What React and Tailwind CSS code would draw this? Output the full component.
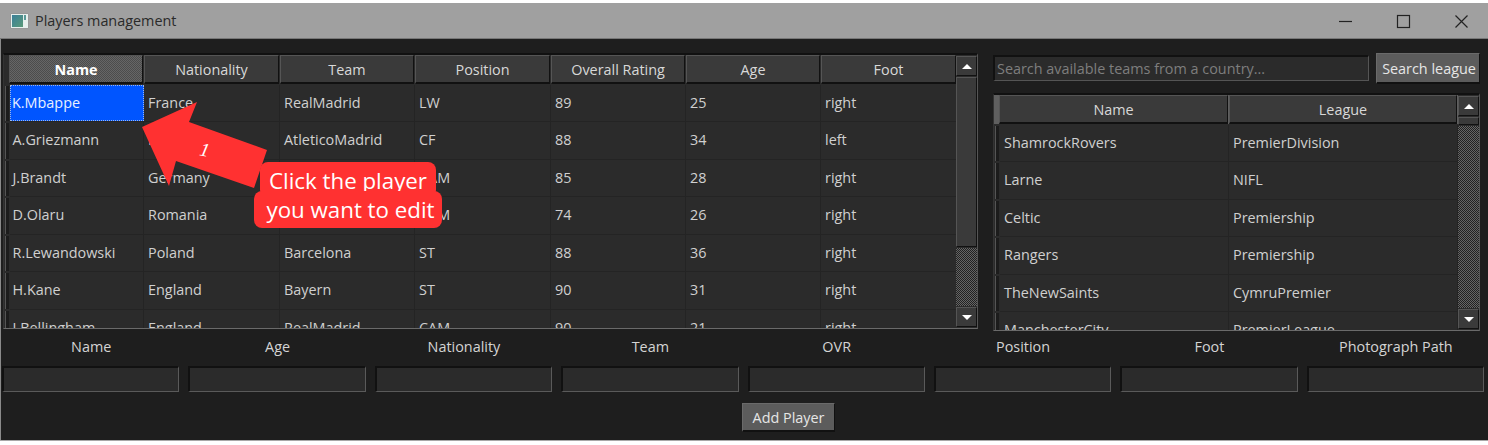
import React from 'react';

const players = [
  ['K.Mbappe', 'France', 'RealMadrid', 'LW', '89', '25', 'right'],
  ['A.Griezmann', 'France', 'AtleticoMadrid', 'CF', '88', '34', 'left'],
  ['J.Brandt', 'Germany', 'Dortmund', 'CAM', '85', '28', 'right'],
  ['D.Olaru', 'Romania', 'FCSB', 'CAM', '74', '26', 'right'],
  ['R.Lewandowski', 'Poland', 'Barcelona', 'ST', '88', '36', 'right'],
  ['H.Kane', 'England', 'Bayern', 'ST', '90', '31', 'right'],
  ['J.Bellingham', 'England', 'RealMadrid', 'CAM', '90', '21', 'right'],
];

const teams = [
  ['ShamrockRovers', 'PremierDivision'],
  ['Larne', 'NIFL'],
  ['Celtic', 'Premiership'],
  ['Rangers', 'Premiership'],
  ['TheNewSaints', 'CymruPremier'],
  ['ManchesterCity', 'PremierLeague'],
];

const playerHeaders = ['Name', 'Nationality', 'Team', 'Position', 'Overall Rating', 'Age', 'Foot'];
const fields = ['Name', 'Age', 'Nationality', 'Team', 'OVR', 'Position', 'Foot', 'Photograph Path'];

const ScrollButton = ({ down }) => (
  <div className="h-[20px] shrink-0 bg-[#3a3a3a] border-t border-l border-[#555] border-b border-r border-b-[#111] border-r-[#111] flex items-center justify-center">
    <div className={down
      ? 'w-0 h-0 border-l-[5px] border-r-[5px] border-t-[5px] border-l-transparent border-r-transparent border-t-white'
      : 'w-0 h-0 border-l-[5px] border-r-[5px] border-b-[5px] border-l-transparent border-r-transparent border-b-white'} />
  </div>
);

const Scrollbar = ({ thumb }) => (
  <div className="w-[21px] shrink-0 flex flex-col gap-[1px] py-[1px]">
    <ScrollButton />
    <div className={`${thumb} shrink-0 bg-[#3a3a3a] border border-[#555] border-b-[#111] border-r-[#111]`} />
    <div className="flex-1 bg-[repeating-conic-gradient(#666_0_25%,#222_0_50%)] bg-[length:2px_2px]" />
    <ScrollButton down />
  </div>
);

const Table = ({ headers, rows, headerH, headerGutter, rowGutter, widths, textPad, restPad, scrollThumb, selected }) => (
  <div className="flex h-full bg-[#2b2b2b] border-t-2 border-t-[#111] border-l border-l-[#333] border-r border-r-[#555] border-b border-b-[#6a6a6a] overflow-hidden">
    <div className="flex-1 min-w-0 flex flex-col">
      <div className={`${headerH} ${headerGutter} flex shrink-0`}>
        {headers.map((h, i) => (
          <div
            key={h}
            className={`${widths[i]} shrink-0 mr-[1px] pt-[2px] flex items-center justify-center text-[14.4px] border-t border-l border-[#555] border-b-2 border-b-[#111] border-r border-r-[#111] ${
              selected && i === 0
                ? 'font-bold text-white bg-[repeating-conic-gradient(#666_0_25%,#4c4c4c_0_50%)] bg-[length:2px_2px]'
                : 'text-[#d8d8d8] bg-[#3a3a3a]'
            }`}
          >
            {h}
          </div>
        ))}
      </div>
      <div className="flex-1 min-h-0 pt-[0.5px] overflow-hidden">
        {rows.map((row, r) => (
          <div key={row[0]} className={`h-[37.5px] flex ${rowGutter} items-stretch`}>
            <div className="w-[4px] my-[1px] shrink-0 bg-[#1c1c1c] border-l border-[#555]" />
            <div className="flex flex-1 border-b border-b-[#242424] ml-[1px]">
              {row.map((cell, i) => {
                const isSel = selected && r === 0 && i === 0;
                return (
                  <div
                    key={i}
                    className={`${widths[i]} shrink-0 mr-[1px] flex items-center text-[14.4px] ${
                      isSel
                        ? 'pl-[1px] bg-[#0055ff] text-[#e8f0ff] border border-dotted border-[#9db8e8]'
                        : `${i === 0 ? textPad : restPad} text-[#d0d0d0] border-r border-r-[#242424]`
                    }`}
                  >
                    {cell}
                  </div>
                );
              })}
            </div>
          </div>
        ))}
      </div>
    </div>
    <Scrollbar thumb={scrollThumb} />
  </div>
);

export default function App() {
  return (
    <div className="relative w-[1488px] h-[445px] flex flex-col bg-white pt-[3px] overflow-hidden font-['Open_Sans','Noto_Sans',sans-serif]">
      {/* barra de titulo */}
      <div className="h-[36px] shrink-0 bg-[#a0a0a0] border-b border-b-[#777] flex items-center pl-[11px]">
        <div className="w-[17px] h-[14px] bg-[#e8f0ee] flex pl-[1px] py-[1px] gap-[1px] shadow-[0_0_1px_#777]">
          <div className="w-[11px] bg-gradient-to-br from-[#3b7f98] to-[#5a9a78]" />
          <div className="w-[2px] h-[5px] bg-[#5a9a98]" />
        </div>
        <span className="ml-[7px] text-[14.4px] text-[#2a2a2a]">Players management</span>
        <div className="ml-auto flex items-center">
          <svg width="180" height="20" viewBox="0 0 180 20" fill="none" stroke="#222" strokeWidth="1.2">
            <path d="M31 10.5h13" />
            <rect x="89.5" y="4.5" width="12" height="12" />
            <path d="M147.5 4.5l12 12M159.5 4.5l-12 12" />
          </svg>
        </div>
      </div>

      <div className="flex-1 min-h-0 flex flex-col bg-[#1e1e1e] border-l border-l-[#8a8a8a] pt-[14px]">
        <div className="h-[278px] shrink-0 flex pl-[2px] pr-[7px]">
          <div className="w-[975px] shrink-0 h-[276px]">
            <Table
              headers={playerHeaders}
              rows={players}
              headerH="h-[29px]"
              headerGutter="pl-[5px]"
              rowGutter="pl-[1px]"
              widths={['w-[134px]', 'w-[135px]', 'w-[134px]', 'w-[135px]', 'w-[134px]', 'w-[134px]', 'w-[135px]']}
              textPad="pl-[2.5px]"
              restPad="pl-[3px]"
              scrollThumb="h-[170px]"
              selected
            />
          </div>
          <div className="ml-[15px] flex-1 min-w-0 flex flex-col">
            <div className="h-[32px] -mt-[1px] flex items-center gap-[7px]">
              <div className="w-[376px] h-[26px] pt-[1px] bg-[#2b2b2b] border-t-2 border-l-2 border-[#111] border-b border-r border-b-[#555] border-r-[#555] flex items-center pl-[2px] text-[14.4px] text-[#7e7e7e]">
                Search available teams from a country...
              </div>
              <div className="w-[104px] h-[31px] pt-[2px] pl-[2px] bg-[#5c5c5c] border-t border-l border-[#6a6a6a] border-b-2 border-r border-b-[#111] border-r-[#111] flex items-center justify-center text-[14.4px] text-[#e6e6e6]">
                Search league
              </div>
            </div>
            <div className="mt-[9px] h-[238px] w-[487px]">
              <Table
                headers={['Name', 'League']}
                rows={teams}
                headerH="h-[29px]"
                headerGutter="pl-[5px] bg-[#5f5f5f]"
                rowGutter="pl-[1px]"
                widths={['w-[229px]', 'w-[228px]']}
                textPad="pl-[4px]"
                restPad="pl-[3px]"
                scrollThumb="h-[8px]"
              />
            </div>
          </div>
        </div>

        {/* formulario */}
        <div className="pl-[1px] pr-[4px] pt-[6px] grid grid-cols-8 gap-x-[9px]">
          {fields.map((f) => (
            <div key={f} className="flex flex-col">
              <div className="h-[19px] pl-[1px] flex items-center justify-center text-[14.4px] text-[#d4d4d4]">{f}</div>
              <div className="mt-[10px] h-[26px] bg-[#2b2b2b] border-t-2 border-l-2 border-[#111] border-b border-r border-b-[#5a5a5a] border-r-[#5a5a5a]" />
            </div>
          ))}
        </div>
        <div className="mt-[11px] pl-[741px] flex">
          <div className="w-[93px] h-[29px] pt-[2px] bg-[#5c5c5c] border-t border-l border-[#6a6a6a] border-b-2 border-r border-b-[#111] border-r-[#111] flex items-center justify-center text-[14.4px] text-[#e6e6e6]">
            Add Player
          </div>
        </div>
      </div>
      <div className="h-[1px] shrink-0 bg-[#a8a8a8] mb-[4px]" />

      {/* anotacion sobre la captura */}
      <svg width="1488" height="445" className="absolute left-0 top-0 pointer-events-none">
        <polygon points="142,127 197,102 189,122 267,150 254,188 176,161 169,186" fill="#ff3131" />
      </svg>
      <span className="absolute left-[200px] top-[138px] rotate-[12deg] italic text-[19px] leading-[24px] text-white font-['Liberation_Serif',serif]">1</span>
      <div className="absolute left-[254px] top-[162px] w-[188px] flex flex-col items-center text-[22.3px] leading-[33px] text-white">
        <div className="bg-[#ff3131] rounded-[8px] w-[176px] h-[36px] flex items-center justify-center whitespace-nowrap">Click the player</div>
        <div className="bg-[#ff3131] rounded-[8px] w-[188px] h-[37px] pl-[5px] -mt-[7px] flex items-center justify-center whitespace-nowrap">you want to edit</div>
      </div>
    </div>
  );
}
